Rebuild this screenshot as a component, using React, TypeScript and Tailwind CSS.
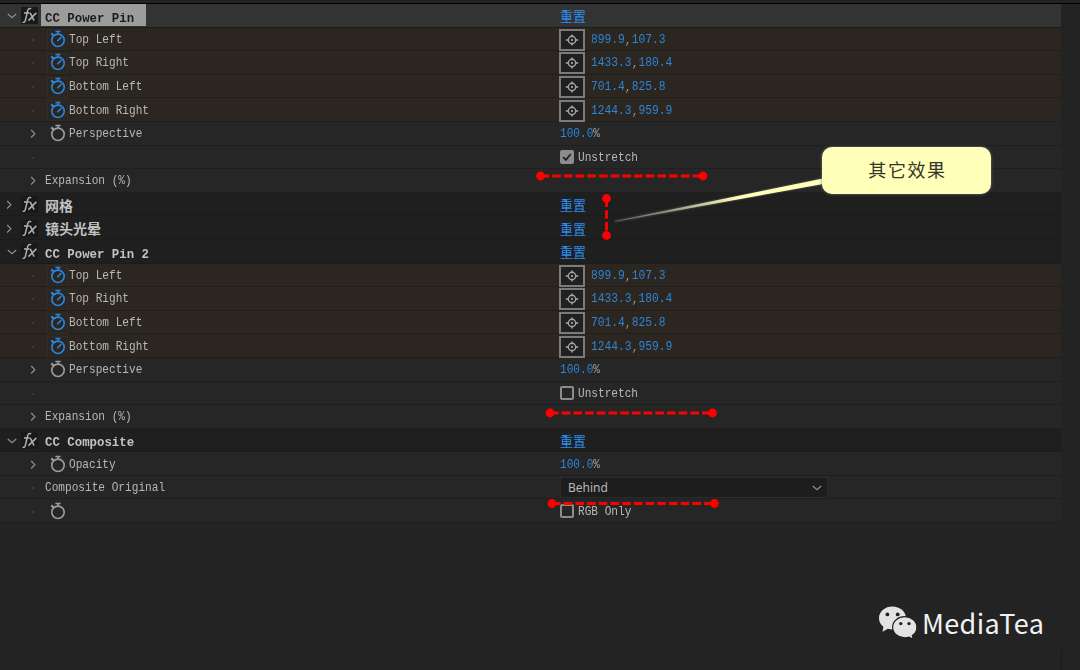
import type { ReactNode } from 'react'
import clsx from 'clsx'

type RowKind = 'effect' | 'keyed' | 'plain'

interface RowData {
  kind: RowKind
  label?: string
  cjk?: boolean
  selected?: boolean
  arrow?: 'down' | 'right'
  watch?: boolean
  value?: ReactNode
}

function Mono({ children, className }: { children: ReactNode; className?: string }) {
  return (
    <span
      className={clsx(
        'inline-block origin-left scale-x-[0.855] whitespace-pre font-["Liberation_Mono","Noto_Sans_CJK_SC",monospace] text-[13px] leading-[16px]',
        className,
      )}
    >
      {children}
    </span>
  )
}

function Chevron({ dir, className }: { dir: 'down' | 'right'; className?: string }) {
  return (
    <svg
      viewBox="0 0 10 10"
      className={clsx('h-[10px] w-[10px] fill-none stroke-[#8f8f8f]', className)}
      strokeWidth="1.2"
    >
      <path d={dir === 'down' ? 'M.8 3l4.2 3.7L9.2 3' : 'M3.2 1L6.8 4.700 3.2 8.500'} />
    </svg>
  )
}

function Stopwatch({ active }: { active: boolean }) {
  return (
    <svg
      viewBox="0 0 16 18"
      className={clsx('mb-[2px] h-[18px] w-[16px] fill-none', active ? 'stroke-[#2a84dc]' : 'stroke-[#9c9c9c]')}
      strokeWidth="1.6"
    >
      <circle cx="8" cy="10.3" r="6.2" />
      <path d="M5.4 1.5h5.2M8 1.5v2.6" />
      <path d="M1.3 3.4l2.5 2.4" strokeWidth="2.2" />
      {active && <path d="M7.3 11.3l4-4.2" />}
    </svg>
  )
}

function Fx() {
  return (
    <span className="flex h-[17px] w-[17px] items-center justify-center bg-[#191919]">
      <svg viewBox="0 0 17 17" className="h-[17px] w-[17px] fill-none stroke-[#b0b0b0]" strokeWidth="1.5">
        <path d="M10.2 1.7C8.3 1 7.2 1.6 6.7 3.6L4.4 13.2C4 15 3 15.7 1.6 15.2M3 5.9h5.600" />
        <path d="M9.2 5.9l3.900 7.700M15.4 5.9L7.400 13.600" />
      </svg>
    </span>
  )
}

function Reset() {
  return (
    <span className="font-['Noto_Sans_CJK_SC',sans-serif] text-[13px] leading-[14px] text-[#2d8ceb]">
      重置
    </span>
  )
}

function Point({ x, y }: { x: string; y: string }) {
  return (
    <div className="-ml-px flex items-center">
      <span className="flex h-[22px] w-[26px] items-center justify-center border-2 border-[#7d7a7a] bg-[#202020]">
        <svg viewBox="0 0 14 12" className="h-[12px] w-[14px] fill-none stroke-[#a6a6a6]" strokeWidth="1.4">
          <circle cx="7" cy="6" r="3.7" />
          <path d="M7 .6v2.6M7 8.8v2.6M.8 6h3M10.2 6h3" />
          <circle cx="7" cy="6" r="1.1" className="fill-[#b0b0b0] stroke-none" />
        </svg>
      </span>
      <Mono className="ml-[6px] scale-x-[0.868] text-[#2d84d8]">
        {x}
        <span className="relative top-px text-[#999]">,</span>
        {y}
      </Mono>
    </div>
  )
}

function Percent() {
  return (
    <Mono className="scale-x-[0.86] text-[#2d84d8]">
      100.0<span className="text-[#a3a3a3]">%</span>
    </Mono>
  )
}

function Check({ label, checked = false }: { label: string; checked?: boolean }) {
  return (
    <div className="flex items-center gap-[4px]">
      <span
        className={clsx(
          'mb-px flex h-[14px] w-[14px] items-center justify-center rounded-[2px] border-2 border-[#8c8c8c]',
          checked && 'bg-[#8c8c8c]',
        )}
      >
        {checked && (
          <svg viewBox="0 0 10 10" className="h-[10px] w-[10px] fill-none stroke-[#222]" strokeWidth="1.8">
            <path d="M1.2 5.2l2.7 2.7L8.8 2" />
          </svg>
        )}
      </span>
      <Mono className="text-[#b8b8b8]">{label}</Mono>
    </div>
  )
}

function Dropdown() {
  return (
    <div className="mb-px flex h-[21px] w-[268px] items-center justify-between border border-[#2c2c2c] bg-[#1d1d1d] pr-[5px] pl-[7px]">
      <span className="mt-px font-['Noto_Sans',sans-serif] text-[12px] leading-4 text-[#b8b8b8]">Behind</span>
      <Chevron dir="down" />
    </div>
  )
}

const points: RowData[] = [
  { kind: 'keyed', label: 'Top Left', watch: true, value: <Point x="899.9" y="107.3" /> },
  { kind: 'keyed', label: 'Top Right', watch: true, value: <Point x="1433.3" y="180.4" /> },
  { kind: 'keyed', label: 'Bottom Left', watch: true, value: <Point x="701.4" y="825.8" /> },
  { kind: 'keyed', label: 'Bottom Right', watch: true, value: <Point x="1244.3" y="959.9" /> },
  { kind: 'plain', label: 'Perspective', watch: true, arrow: 'right', value: <Percent /> },
]

const rows: RowData[] = [
  { kind: 'effect', label: 'CC Power Pin', arrow: 'down', selected: true },
  ...points,
  { kind: 'plain', value: <Check label="Unstretch" checked /> },
  { kind: 'plain', label: 'Expansion (%)', arrow: 'right' },
  { kind: 'effect', label: '网格', cjk: true, arrow: 'right' },
  { kind: 'effect', label: '镜头光晕', cjk: true, arrow: 'right' },
  { kind: 'effect', label: 'CC Power Pin 2', arrow: 'down' },
  ...points,
  { kind: 'plain', value: <Check label="Unstretch" /> },
  { kind: 'plain', label: 'Expansion (%)', arrow: 'right' },
  { kind: 'effect', label: 'CC Composite', arrow: 'down' },
  { kind: 'plain', label: 'Opacity', watch: true, arrow: 'right', value: <Percent /> },
  { kind: 'plain', label: 'Composite Original', value: <Dropdown /> },
  { kind: 'plain', watch: true, value: <Check label="RGB Only" /> },
]

function EffectRow({ row }: { row: RowData }) {
  return (
    <div
      className={clsx(
        'flex h-[23.6px] items-center border-b border-[#1b1b1b]',
        row.selected ? 'bg-[#333333]' : 'bg-[#1f1f1f]',
      )}
    >
      <div className="flex h-full w-[560px] items-center">
        <Chevron
          dir={row.arrow ?? 'right'}
          className={row.arrow === 'down' ? 'mt-[2px] ml-[7px]' : 'mt-[2px] mr-[3px] ml-[4px]'}
        />
        <div className="mt-px ml-[4px]">
          <Fx />
        </div>
        <div
          className={clsx(
            'ml-[3px] flex h-[22px] items-center pl-[4px]',
            row.selected && 'w-[105px] bg-[#9c9c9c] text-[#1c1c1c]',
            !row.selected && 'text-[#c2c2c2]',
          )}
        >
          {row.cjk ? (
            <span className="mt-px font-['Noto_Sans_CJK_SC',sans-serif] text-[14px] leading-[16px] font-bold">
              {row.label}
            </span>
          ) : (
            <Mono className="mt-[7px] scale-x-[0.952] font-bold">{row.label}</Mono>
          )}
        </div>
      </div>
      <div className="mt-[2px] flex">
        <Reset />
      </div>
    </div>
  )
}

function PropertyRow({ row }: { row: RowData }) {
  const keyed = row.kind === 'keyed'
  return (
    <div
      className={clsx(
        'flex h-[23.6px] items-center border-b border-[#1f1f1f] pt-[2px]',
        keyed ? 'bg-[#2b2720]' : 'bg-[#262626]',
      )}
    >
      <div className="flex h-full w-[560px] items-center">
        <div className="flex w-[47px] shrink-0 justify-center pl-[19px]">
          {row.arrow ? <Chevron dir="right" /> : <span className="h-[2px] w-[2px] bg-[#3a3a3a]" />}
        </div>
        {row.watch && (
          <div
            className={clsx(
              'flex h-[21px] w-[21px] items-center justify-center border',
              keyed ? 'border-[#302d29]' : 'border-transparent',
            )}
          >
            <Stopwatch active={keyed} />
          </div>
        )}
        {row.label && <Mono className={clsx('text-[#b8b8b8]', row.watch ? 'ml-px' : '-ml-[2px]')}>{row.label}</Mono>}
      </div>
      {row.value}
    </div>
  )
}

/* Hand-placed markers and the callout that lie over the panel */
function Annotations() {
  return (
    <>
      <svg viewBox="0 0 1080 670" className="absolute inset-0 h-[670px] w-[1080px]">
        <defs>
          <linearGradient id="tail" gradientUnits="userSpaceOnUse" x1="616" y1="221" x2="740" y2="198">
            <stop offset="0" stopColor="#666" />
            <stop offset="0.35" stopColor="#8b8b78" />
            <stop offset="1" stopColor="#ffffb9" />
          </linearGradient>
        </defs>
        <path d="M615 221L823 178.500V184L615 221.800z" fill="url(#tail)" className="drop-shadow-[0_0_1px_#666]" />
        <g stroke="#ff0000" strokeWidth="2.8" strokeDasharray="8.6 3.1">
          <path d="M540.5 176H703" />
          <path d="M550 413H712.5" />
          <path d="M552 503.5H714.5" />
          <path d="M606.5 198.5V235.5" />
        </g>
        <g fill="#ff0000">
          <circle cx="540.5" cy="176" r="4.4" />
          <circle cx="703" cy="176" r="4.4" />
          <circle cx="550" cy="413" r="4.4" />
          <circle cx="712.5" cy="413" r="4.4" />
          <circle cx="552" cy="503.5" r="4.4" />
          <circle cx="714.5" cy="503.5" r="4.4" />
          <circle cx="606.5" cy="198.5" r="4.4" />
          <circle cx="606.5" cy="235.5" r="4.4" />
        </g>
      </svg>
      <div className="absolute top-[147px] left-[822px] flex h-[47px] w-[169px] items-center justify-center rounded-[10px] bg-[#ffffb9] shadow-[0_0_3px_#777]">
        <span className="mb-[3px] ml-[2px] font-['Noto_Sans_CJK_SC',sans-serif] text-[18px] leading-6 tracking-[1.6px] text-[#353528]">
          其它效果
        </span>
      </div>
    </>
  )
}

function Watermark() {
  return (
    <div className="absolute top-[605px] left-[878px] flex items-center">
      <svg viewBox="0 0 40 36" className="h-[36px] w-[40px] fill-[#e3e3e3]">
        <path d="M14.5 1.5C7.2 1.5 1 6.4 1 13c0 3.8 1.7 6.6 4.4 8.7l-.9 5 5.4-2.9c1.5.5 3 .7 4.6.7C21.8 24.5 28 19.5 28 13S21.8 1.5 14.5 1.5z" />
        <path
          d="M26.8 11.7c-6.8 0-12.2 4.5-12.2 10.6 0 6 5.4 10.5 12.2 10.5 1.5 0 2.9-.2 4.2-.7l4.2 2.2-.9-3.8c2.8-1.8 4.6-4.8 4.6-8.2 0-6-5.3-10.6-12.1-10.6z"
          className="stroke-[#232323]"
          strokeWidth="1.2"
        />
        <g className="fill-[#232323]">
          <circle cx="9.4" cy="9.4" r="1.9" />
          <circle cx="19.7" cy="9.4" r="1.9" />
          <circle cx="22.8" cy="18.6" r="1.7" />
          <circle cx="31" cy="18.6" r="1.7" />
        </g>
      </svg>
      <span className="ml-[4px] font-['Noto_Sans_CJK_SC',sans-serif] text-[27px] leading-9 tracking-[0.35px] text-[#f2f2f2]">
        MediaTea
      </span>
    </div>
  )
}

export default function App() {
  return (
    <div className="relative flex h-[670px] w-[1080px] flex-col overflow-hidden bg-[#232323]">
      <div className="h-[4px] shrink-0 border-b border-black" />
      <div className="w-[1061px]">
        {rows.map((row, i) =>
          row.kind === 'effect' ? <EffectRow key={i} row={row} /> : <PropertyRow key={i} row={row} />,
        )}
      </div>
      <div className="mt-auto h-[20px] w-[1062px] border-r border-[#1b1b1b]" />
      <Annotations />
      <Watermark />
    </div>
  )
}
